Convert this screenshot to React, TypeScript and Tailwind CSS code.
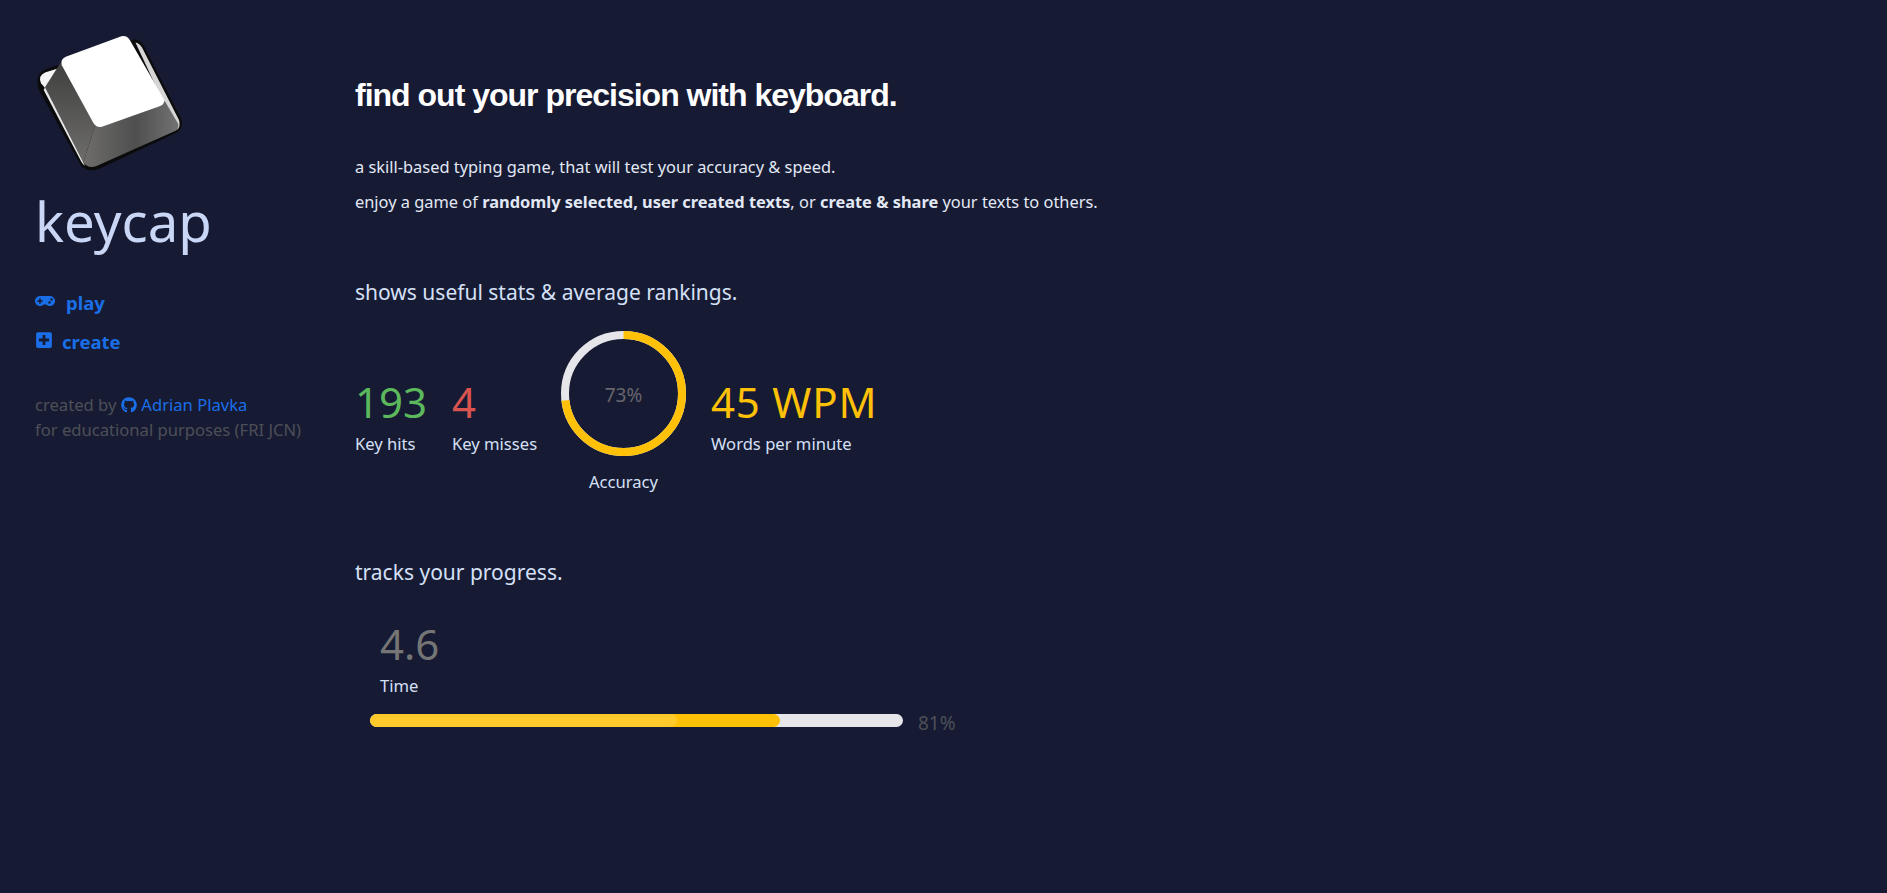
import React from "react";
import { FaGamepad, FaPlusSquare, FaGithub } from "react-icons/fa";

function KeycapLogo() {
  return (
    <svg width="149" height="139" viewBox="100 100 445 415" className="block">
      <defs>
        <linearGradient id="leftFace" x1="0.5" y1="0" x2="0.5" y2="1">
          <stop offset="0" stopColor="#3f3f3f" />
          <stop offset="1" stopColor="#6e6d6b" />
        </linearGradient>
        <linearGradient id="bottomFace" x1="0" y1="0" x2="1" y2="0">
          <stop offset="0" stopColor="#6e6d6b" />
          <stop offset="0.55" stopColor="#4f4f4f" />
          <stop offset="1" stopColor="#727272" />
        </linearGradient>
      </defs>
      <path d="M128 210 L392 120 Q412 116 424 136 L536 356 Q546 384 522 398 L290 506 Q256 518 236 494 L112 270 Q98 226 128 210 Z" fill="#0b0b0b" />
      <path d="M130 218 L168 206 L130 264 L118 250 Q108 228 130 218 Z" fill="#f4f4f4" />
      <path d="M400 128 Q412 130 420 144 L530 360 Q536 380 524 390 L480 300 Z" fill="#d6d6d6" />
      <path d="M178 186 L130 262 L244 486 L280 376 Z" fill="url(#leftFace)" />
      <path d="M280 376 L244 486 Q258 506 282 498 L520 392 Q530 386 528 372 L488 304 Z" fill="url(#bottomFace)" />
      <path d="M130 262 L126 270 L238 484 Q244 494 250 498 Z" fill="#e8e8e8" />
      <path d="M194 170 L358 110 Q374 106 384 122 L484 296 Q490 310 474 318 L300 380 Q284 384 274 368 L180 196 Q174 178 194 170 Z" fill="#ffffff" />
    </svg>
  );
}

function Stat({ value, label, color, className }: { value: string; label: string; color: string; className?: string }) {
  return (
    <div className={className}>
      <div className={`text-[42px] leading-[48px] ${color}`}>{value}</div>
      <div className="mt-[6px] text-[16.6px] leading-[24px] text-[#d5e0f7]">{label}</div>
    </div>
  );
}

export default function App() {
  return (
    <div className="flex min-h-[893px] bg-[#161b33] font-['Noto_Sans','Open_Sans',sans-serif]">
      <aside className="w-[355px] shrink-0 pl-[35px] pt-[33px]">
        <KeycapLogo />
        <h1 className="mt-[13px] text-[54.5px] leading-[72px] font-normal text-[#c9d6f5]">keycap</h1>
        <nav className="mt-[26px] flex flex-col text-[18.5px] font-bold text-[#1a6fe8]">
          <a className="flex h-[39px] items-center gap-[11px]">
            <FaGamepad className="h-[20px] w-[20px] -translate-y-[2px]" />
            play
          </a>
          <a className="flex h-[39px] items-center gap-[9px]">
            <FaPlusSquare className="h-[18px] w-[18px] -translate-y-[2px]" />
            create
          </a>
        </nav>
        <div className="mt-[31px] text-[16.6px] leading-[25px] text-[#4d4f57]">
          <div className="flex items-center gap-[5px]">
            created by
            <span className="flex items-center gap-[4px] text-[#1a6fe8]">
              <FaGithub className="h-[16px] w-[16px]" />
              Adrian Plavka
            </span>
          </div>
          <div>for educational purposes (FRI JCN)</div>
        </div>
      </aside>
      <main className="flex-1 pt-[75px]">
        <h2 className="font-['Liberation_Sans',sans-serif] text-[32px] leading-[40px] font-bold tracking-[-1px] text-white">
          find out your precision with keyboard.
        </h2>
        <div className="mt-[34px] text-[16.4px] leading-[35px] text-[#e3e8f5]">
          <p>a skill-based typing game, that will test your accuracy &amp; speed.</p>
          <p>
            enjoy a game of <b>randomly selected, user created texts</b>, or <b>create &amp; share</b> your texts to others.
          </p>
        </div>
        <h3 className="mt-[58px] text-[21px] leading-[30px] text-[#d5e0f7]">shows useful stats &amp; average rankings.</h3>
        <div className="mt-[24px] flex items-start">
          <Stat value="193" label="Key hits" color="text-[#5cb85c]" className="mt-[47px] w-[97px]" />
          <Stat value="4" label="Key misses" color="text-[#d9534f]" className="mt-[47px] w-[109px]" />
          <div className="flex w-[125px] flex-col items-center">
            <div className="relative h-[125px] w-[125px]">
              <svg width="125" height="125" viewBox="0 0 125 125">
                <circle cx="62.5" cy="62.5" r="58.5" fill="none" stroke="#e6e6ea" strokeWidth="8" />
                <circle cx="62.5" cy="62.5" r="58.5" fill="none" stroke="#ffc107" strokeWidth="8" strokeDasharray="268.3 99.3" transform="rotate(-90 62.5 62.5)" />
              </svg>
              <span className="absolute inset-0 flex translate-y-[2px] items-center justify-center text-[19px] text-[#66666c]">73%</span>
            </div>
            <div className="mt-[14px] text-[16.6px] leading-[24px] text-[#d5e0f7]">Accuracy</div>
          </div>
          <Stat value="45 WPM" label="Words per minute" color="text-[#ffc107] tracking-[0.8px]" className="mt-[47px] ml-[25px]" />
        </div>
        <h3 className="mt-[63px] text-[21px] leading-[30px] text-[#d5e0f7]">tracks your progress.</h3>
        <div className="mt-[33px] ml-[25px]">
          <div className="text-[42px] leading-[48px] text-[#757575]">4.6</div>
          <div className="mt-[6px] text-[16.6px] leading-[24px] text-[#d5e0f7]">Time</div>
        </div>
        <div className="mt-[6px] ml-[15px] flex items-center">
          <div className="relative h-[13px] w-[533px] overflow-hidden rounded-full bg-[#e6e6ea]">
            <div className="absolute inset-y-0 left-0 w-[410px] rounded-full bg-[#ffc107]" />
            <div className="absolute inset-y-0 left-0 w-[307px] rounded-full bg-[#ffca2c]" />
          </div>
          <span className="mt-[5px] ml-[15px] text-[19px] text-[#4d4f57]">81%</span>
        </div>
      </main>
    </div>
  );
}
